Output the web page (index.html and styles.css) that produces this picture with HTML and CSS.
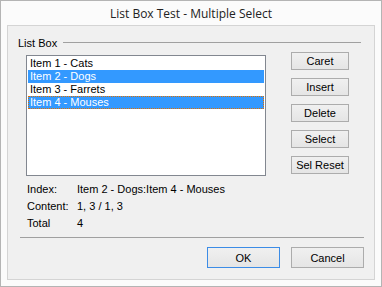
FILE: index.html
```html
<!DOCTYPE html>
<html>
    <head>
        <meta charset="UTF-8">
        <meta name="viewport" content="width=device-width, initial-scale=1">
        <link rel="stylesheet" href="styles.css">
    </head>
    <body>
        <div class="window">
            <div class="titlebar">List Box Test - Multiple Select</div>

            <div class="client">
                <div class="group-head">
                    <span class="group-title">List Box</span>
                    <span class="group-rule"></span>
                </div>

                <div class="group-body">
                    <ul class="listbox">
                        <li>Item 1 - Cats</li>
                        <li class="selected">Item 2 - Dogs</li>
                        <li>Item 3 - Farrets</li>
                        <li class="selected focused">Item 4 - Mouses</li>
                    </ul>

                    <div class="side-buttons">
                        <button class="btn">Caret</button>
                        <button class="btn">Insert</button>
                        <button class="btn">Delete</button>
                        <button class="btn">Select</button>
                        <button class="btn">Sel Reset</button>
                    </div>
                </div>

                <div class="info">
                    <span>Index:</span><span>Item 2 - Dogs:Item 4 - Mouses</span>
                    <span>Content:</span><span>1, 3 / 1, 3</span>
                    <span>Total</span><span>4</span>
                </div>

                <div class="separator"></div>

                <div class="footer">
                    <button class="btn btn-big btn-default">OK</button>
                    <button class="btn btn-big">Cancel</button>
                </div>
            </div>
        </div>
    </body>
</html>
```

FILE: styles.css
```css
* {
    box-sizing: border-box;
}

body {
    margin: 0;
    font-family: "Liberation Sans", Arial, sans-serif;
    font-size: 11px;
    color: #000;
}

/* Outer window frame */
.window {
    width: 382px;
    height: 287px;
    border: 1px solid #b4b4b4;
    background: #fbfbfb;
    display: flex;
    flex-direction: column;
    padding: 0 6px 6px 6px;
}

.titlebar {
    height: 24px;
    line-height: 26px;
    text-align: center;
    font-family: "Open Sans", "Noto Sans", sans-serif;
    font-size: 12px;
    color: #222;
}

/* Dialog client area */
.client {
    flex: 1;
    border: 1px solid #d4d4d4;
    background: #f0f0f0;
    padding: 10px 10px 0 10px;
}

/* Group box header: title followed by a line */
.group-head {
    display: flex;
    align-items: center;
    height: 13px;
    margin-right: 3px;
}

.group-title {
    margin-right: 6px;
}

.group-rule {
    flex: 1;
    height: 1px;
    background: #a0a0a0;
}

.group-body {
    display: flex;
    align-items: flex-start;
    margin-top: 3px;
    padding-left: 8px;
}

/* The list box */
.listbox {
    margin: 3px 0 0 0;
    padding: 1px;
    list-style: none;
    width: 240px;
    height: 121px;
    border: 1px solid #828790;
    background: #fff;
}

.listbox li {
    height: 13px;
    line-height: 13px;
    padding-left: 2px;
    white-space: nowrap;
}

.listbox li.selected {
    background: #3399ff;
    color: #fff;
}

/* Focus rectangle on the caret item */
.listbox li.focused {
    outline: 1px dotted #e07000;
    outline-offset: -1px;
}

.side-buttons {
    display: flex;
    flex-direction: column;
    gap: 8px;
    margin-left: 25px;
}

/* Push buttons */
.btn {
    width: 58px;
    height: 18px;
    padding: 0;
    border: 1px solid #acacac;
    background: linear-gradient(#f0f0f0, #e5e5e5);
    font-family: "Liberation Sans", Arial, sans-serif;
    font-size: 11px;
    color: #000;
}

.btn-big {
    width: 73px;
    height: 21px;
}

.btn-default {
    border-color: #3c8ce6;
}

/* Index / Content / Total rows */
.info {
    display: grid;
    grid-template-columns: 50px auto;
    grid-auto-rows: 17px;
    align-items: center;
    margin-top: 4px;
    padding-left: 9px;
}

.separator {
    height: 1px;
    background: #a0a0a0;
    margin: 6px 0 0 2px;
}

.footer {
    display: flex;
    justify-content: flex-end;
    gap: 11px;
    margin-top: 9px;
}
```
